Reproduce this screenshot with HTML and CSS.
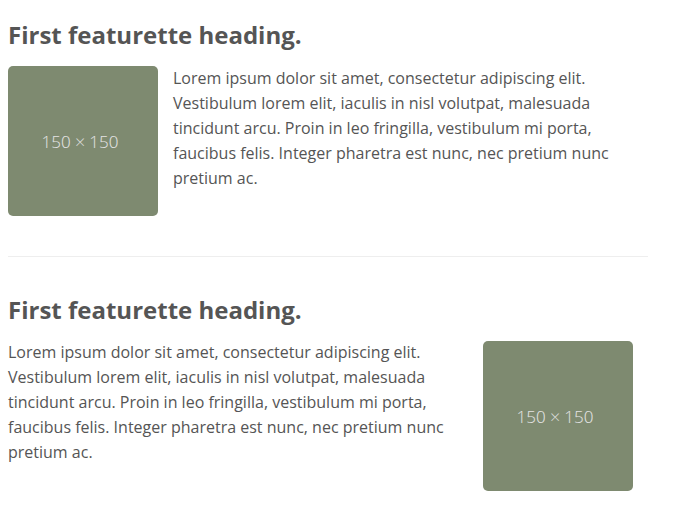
FILE: index.html
```html
<!DOCTYPE html>
<html>
<head>
<meta charset="utf-8">
<link rel="stylesheet" href="styles.css">
</head>
<body>
<div class="container">
  <section class="featurette">
    <h2 class="featurette-heading">First featurette heading.</h2>
    <div class="row">
      <div class="placeholder">150 × 150</div>
      <p class="lead left-gap">Lorem ipsum dolor sit amet, consectetur adipiscing elit. Vestibulum lorem elit, iaculis in nisl volutpat, malesuada tincidunt arcu. Proin in leo fringilla, vestibulum mi porta, faucibus felis. Integer pharetra est nunc, nec pretium nunc pretium ac.</p>
    </div>
  </section>
  <hr class="divider">
  <section class="featurette">
    <h2 class="featurette-heading">First featurette heading.</h2>
    <div class="row">
      <p class="lead right-gap">Lorem ipsum dolor sit amet, consectetur adipiscing elit. Vestibulum lorem elit, iaculis in nisl volutpat, malesuada tincidunt arcu. Proin in leo fringilla, vestibulum mi porta, faucibus felis. Integer pharetra est nunc, nec pretium nunc pretium ac.</p>
      <div class="placeholder">150 × 150</div>
    </div>
  </section>
</div>
</body>
</html>
```
FILE: styles.css
```css
html, body {
  margin: 0;
  padding: 0;
  background: #fff;
}
body {
  font-family: "Open Sans", "Liberation Sans", sans-serif;
  color: #555;
}
.container {
  width: 640px;
  padding: 0 8px;
}
.featurette-heading {
  margin: 22px 0 18px;
  font-size: 24px;
  line-height: 26px;
  font-weight: 700;
  color: #555;
}
.row {
  display: flex;
  align-items: flex-start;
}
.placeholder {
  flex: 0 0 150px;
  box-sizing: border-box;
  width: 150px;
  height: 150px;
  padding-right: 6px;
  border-radius: 5px;
  background: #7e8a70;
  color: #e4e4e4;
  font-family: "Open Sans Light", "Open Sans", sans-serif;
  font-size: 17px;
  font-weight: 300;
  display: flex;
  align-items: center;
  justify-content: center;
}
.lead {
  margin: 0;
  flex: 1;
  font-size: 16px;
  line-height: 25px;
}
.left-gap {
  margin-left: 15px;
}
.right-gap {
  margin-right: 15px;
  margin-top: -1px;
}
.row .right-gap + .placeholder {
  margin-right: 15px;
}
.divider {
  margin: 40px 0;
  border: 0;
  border-top: 1px solid #eee;
}
```
